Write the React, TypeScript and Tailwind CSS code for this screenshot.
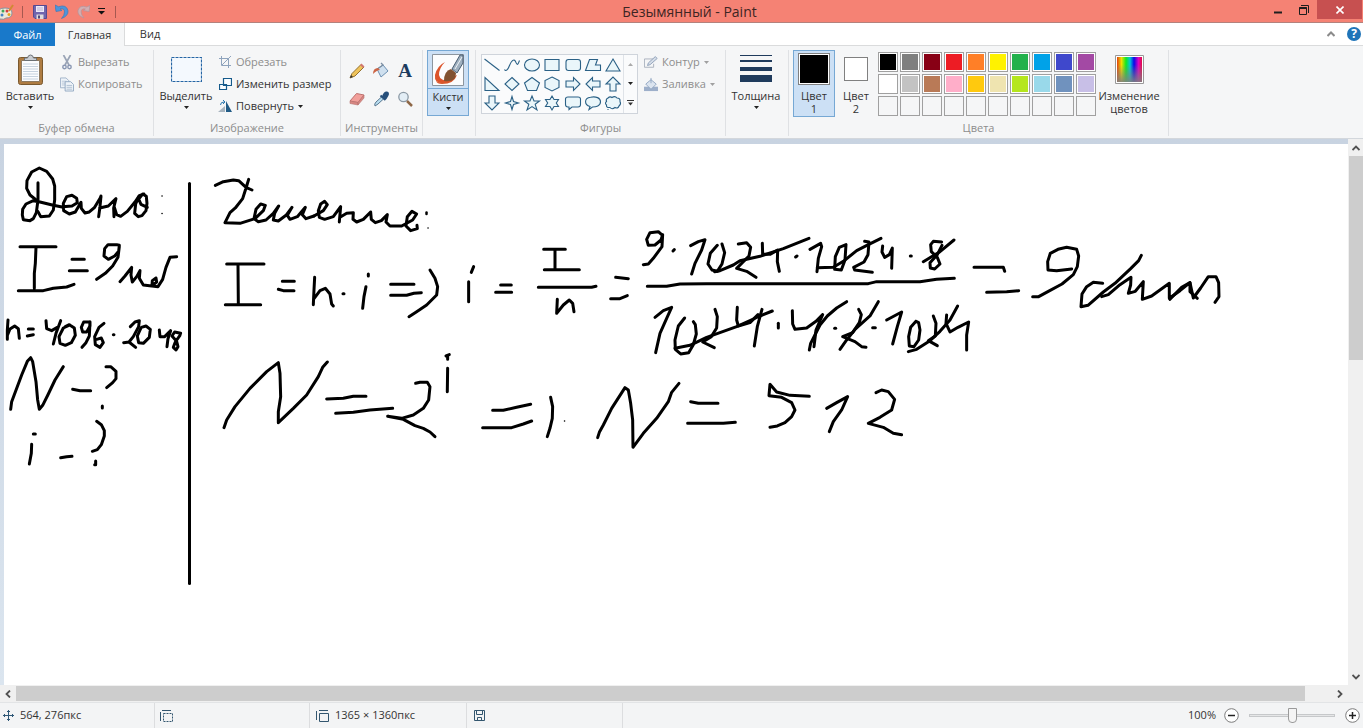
import React from "react";

type Kids = { children?: React.ReactNode };

const PALETTE: string[] = [
  "#000000", "#7f7f7f", "#880015", "#ed1c24", "#ff7f27", "#fff200", "#22b14c", "#00a2e8", "#3f48cc", "#a349a4",
  "#ffffff", "#c3c3c3", "#b97a57", "#ffaec9", "#ffc90e", "#efe4b0", "#b5e61d", "#99d9ea", "#7092be", "#c8bfe7",
  "", "", "", "", "", "", "", "", "", "",
];

const SHAPES: { name: string; d: string }[] = [
  { name: "Линия", d: "M2.5 4 17.5 15.5" },
  { name: "Кривая", d: "M2.5 14.5C4 17 6 14.5 7.5 10.5S12 3 13.5 6.5 15.5 11 17.5 5.5" },
  { name: "Овал", d: "M2.5 10a7.5 6 0 1 0 15 0a7.5 6 0 1 0-15 0" },
  { name: "Прямоугольник", d: "M3 4.5H17V15.5H3Z" },
  { name: "Скруглённый прямоугольник", d: "M5.5 4.5H15Q17.5 4.5 17.5 7V13Q17.5 15.5 15 15.5H5.5Q3 15.5 3 13V7Q3 4.5 5.5 4.5Z" },
  { name: "Многоугольник", d: "M6.5 4.5H14.5L12.5 10H17.5V15.5H2.5Z" },
  { name: "Треугольник", d: "M10 4 17 16H3Z" },
  { name: "Прямоугольный треугольник", d: "M3 3.5V16.5H17Z" },
  { name: "Ромб", d: "M10 3.5 17 10 10 16.5 3 10Z" },
  { name: "Пятиугольник", d: "M10 3.5 17.5 9 14.5 16.5H5.5L2.5 9Z" },
  { name: "Шестиугольник", d: "M10 3 17 6.5V13.5L10 17 3 13.5V6.5Z" },
  { name: "Стрелка вправо", d: "M3 7H10.5V3.5L17 10 10.5 16.5V13H3Z" },
  { name: "Стрелка влево", d: "M17 7H9.5V3.5L3 10 9.5 16.5V13H17Z" },
  { name: "Стрелка вверх", d: "M7 17V10H3L10 3 17 10H13V17Z" },
  { name: "Стрелка вниз", d: "M7 3V10H3L10 17 17 10H13V3Z" },
  { name: "Звезда 4", d: "M10 3.5 11.5 8.5 16.5 10 11.5 11.5 10 16.5 8.5 11.5 3.5 10 8.5 8.5Z" },
  { name: "Звезда 5", d: "M10 3 12 8H17.5L13.2 11.3 15 17 10 13.6 5 17 6.8 11.3 2.5 8H8Z" },
  { name: "Звезда 6", d: "M10 3 12 6.5H16.5L14.3 10 16.5 13.5H12L10 17 8 13.5H3.5L5.7 10 3.5 6.5H8Z" },
  { name: "Прямоугольная выноска", d: "M5 4H15Q17.5 4 17.5 6V11.5Q17.5 14 15 14H9L6 16.5V14H5Q2.5 14 2.5 11.5V6Q2.5 4 5 4Z" },
  { name: "Овальная выноска", d: "M7 13.5C1 12 1 5 7.5 4.2C13 3 17.5 5 17.5 8.8C17.5 13 13 14 9.5 14L6 16.5Z" },
  { name: "Выноска-облако", d: "M5 5Q7 3 9 4.5Q12 2.5 14 5Q17.5 5 17 8.5Q18.5 11 16 13Q15 16 12 14.5Q9 17 7 14.5Q3 15 3.5 12Q1.5 10 3.5 8.5Q2.5 6 5 5ZM4.5 16.5h1" },
];

type Ink = { x: number; y: number; strokes: string[] };

/* Brush strokes, grouped by area; each area uses a grid three times finer than the canvas. */
const INK: Ink[] = [
  {
    x: -4, y: 6,
    strokes: [
      "M114 98V150L109 188 100 206 90 212 70 209 67 195 68 178 78 162 100 152 120 156 160 166 190 172",
      "M114 154 90 135 80 115 81 92 95 66 118 54 140 64 158 87 164 108 164 150 160 180 148 198 122 200 114 185",
      "M188 170 216 168 232 158 230 145 216 136 200 140 190 160 191 182 208 192 226 186 243 157 244 175 255 189 268 186 284 172 302 142",
      "M303 138 300 170 296 200M299 174 325 168 348 146 341 174 342 200M343 172 350 194 362 199 382 184 405 156 416 140",
      "M432 132 418 137 407 162 404 190 415 200 426 197 438 182 441 160 439 139 428 132 416 147 423 163 442 172",
      "M60 290H168M108 292 106 340 103 370V415M55 422H130L160 415 200 411 222 403",
      "M216 328H253M208 362H262",
      "M350 284H324L314 296 312 318 325 328 344 318 356 304 358 286 350 284M358 290 354 322 338 348 316 370 290 388",
      "M360 395 375 378 395 352 393 375 397 396 410 380 420 362 418 385 430 405 455 408 470 396 468 384 457 392 456 408 474 410 488 388 498 352 510 322 530 320",
    ],
  },
  {
    x: -4, y: 166,
    strokes: [
      "M24 30 22 60V88M22 76 30 57 44 48 55 56 58 85",
      "M85 57H100M82 78 100 74",
      "M138 32 140 56 155 62 172 52M182 32 168 70 160 102",
      "M210 45 190 54 177 80 180 100 196 106 214 98 226 76 223 54 208 44 196 50",
      "M268 36 251 36 244 52 248 66 260 66 270 48 270 35 268 78 258 98 246 112",
      "M312 40 297 52 284 80 286 104 300 112 310 98 304 84 290 88",
      "M340 74H342",
      "M391 50 405 36 418 32 416 50 400 80 387 96 371 98M387 96 407 112",
      "M423 54 412 78 416 98 430 100 448 82 451 58 438 48 424 52",
      "M478 60 480 80 494 80 510 64M512 62 504 86 501 110",
      "M542 70 524 66 516 78 530 94 534 110 528 120 520 112 526 96 540 76",
      "M32 298 35 275 65 195 82 154 92 143 98 155 108 215 113 270 118 298 128 286 145 252 165 210 190 170",
      "M218 238 240 242H272",
      "M318 170H332L348 184V206L338 218 320 233M307 288V294",
      "M100 372H106M95 403 94 430 88 462",
      "M182 443 200 440 216 439",
      "M290 334 304 344 313 362V378L304 404 292 419 277 424M287 453V464H284",
    ],
  },
  {
    x: 206, y: 26,
    strokes: [
      "M16 46 40 35 70 30 86 32 108 52 126 60M116 28 110 48 98 86 76 114 60 128 45 158 90 160 135 146 160 122 166 106 152 102 138 118 132 146 145 155 168 150 190 130 206 108 194 130 190 150 205 153 228 136 246 112 232 136 240 148 262 140 286 112 277 134 288 146 312 138",
      "M312 138 340 122 352 104 344 94 332 102 325 122 328 142 344 148 370 140 392 110 388 156M390 142 410 130 430 128 429 148 440 156 460 148 482 126M482 126 484 148 496 158 514 152 532 134 528 156 540 168 575 168 608 150 620 132 606 124 592 140 588 168 602 182 622 176 621 166",
      "M50 282H162M84 285 85 400M46 404H152",
      "M217 334H253M205 358 220 362H252",
      "M314 322 312 360 310 404M312 386 330 362 346 355 360 372 365 402 370 408",
      "M399 371H402",
      "M475 312V318M468 350 462 380 458 415",
      "M542 343H612M542 376H590L612 370 634 368M660 300 675 325 683 350 680 375 650 405 620 425 597 440",
      "M791 290 784 307M776 335V395",
      "M872 345H904M857 367H905",
    ],
  },
  {
    x: 516, y: 76,
    strokes: [
      "M71 88H136M105 90V145M73 149H178M55 202H215L228 199",
      "M112 238 110 280 130 255 148 240 158 250 162 275",
      "M287 172 325 176M272 236H300L322 227",
      "M425 44 415 35 390 38 380 58 385 76 405 75 423 60 428 44 426 80 400 115 385 132 370 134",
      "M459 93 463 89",
      "M512 77 535 65 555 59 545 90 525 130 515 162",
      "M592 76 571 100 564 132 576 150 592 154 606 132 614 98 606 72",
      "M655 72 680 68 692 82 687 108 650 145 680 154 708 172",
      "M584 155 600 152 640 135 660 122 720 109 790 86 867 55",
      "M382 199H440L480 192 560 191H1045L1070 185H1200L1250 178 1303 175",
      "M405 292 430 272 455 262 440 295 420 340 407 398",
      "M494 294 475 318 465 360 466 388 482 402 506 398 520 374 529 342 526 314 520 305",
      "M585 268 592 290 590 324 574 350 548 366 583 383",
      "M652 262 650 300 655 318 690 308 714 284M726 268 712 320 703 378",
      "M465 385 510 376 560 352 650 320 720 288 757 273",
    ],
  },
  {
    x: 736, y: 76,
    strokes: [
      "M67 70 68 103H90L113 90 112 125 118 154",
      "M167 111 171 108",
      "M210 88 242 70 245 80 235 115 231 155",
      "M318 74 298 82 286 110 284 148 304 150 315 120 318 74",
      "M374 64 387 66 384 104 372 126 341 142 344 150 397 157",
      "M232 143 280 142 310 124 350 92 385 74 423 55",
      "M428 78 426 96 434 112 448 104 457 84 455 145",
      "M511 108H514",
      "M605 66 580 64 572 74 574 95 592 112 600 132 584 147 571 144 570 128 592 104 606 76",
      "M550 125 600 95 642 60",
      "M115 310V324",
      "M157 272 158 312 165 328 200 324 228 304 248 284M248 284 228 330 222 380",
      "M208 390 212 370 240 315 262 288 290 264 320 245",
      "M284 325H287",
      "M356 268 364 284 358 308 338 338 308 350 345 365 365 380 378 382",
      "M300 388 320 360 345 328 390 288 415 245",
      "M398 323H406",
      "M440 300 485 276 472 320 458 372",
      "M528 304 512 322 506 350 508 378 522 380 536 360 540 330 536 308 528 304",
      "M580 288 588 310 586 348 565 362 592 377",
      "M620 285 618 310 630 336 654 322 686 306 680 345V390",
      "M505 395 530 388 570 362 600 334 630 300 653 258",
    ],
  },
  {
    x: 956, y: 86,
    strokes: [
      "M42 112H130L134 124M80 187 140 185 176 182",
      "M335 117 290 122 264 120 263 95 271 70 294 58 320 52 350 58 356 78 352 110 340 134 306 162 265 184 236 200H218",
      "M428 160 400 157 380 170 366 192 363 230 384 226 430 186 465 160 512 116 536 92 544 76",
      "M425 200 445 194 480 164 513 142 512 165 505 190 526 184 550 155 547 208 575 198 628 160 628 205 660 182 690 158 690 185 712 205",
      "M630 208 665 172 690 158 700 204 722 174 745 140 768 140 776 158 777 200 765 217",
    ],
  },
  {
    x: 206, y: 196,
    strokes: [
      "M42 263 50 240 75 200 120 145 170 95 205 68 210 100 212 170 205 215V248L250 205 290 165 325 110 338 82 352 66",
      "M350 177 400 175 430 169H468M377 220 430 217 480 210 548 205",
      "M617 130 630 127H652L660 140 656 180 640 205 610 225 575 235 533 229 580 238 615 257 640 265 660 276 675 290",
      "M708 48 718 44M713 50V58M713 85 712 155",
      "M848 211H880L920 202 962 193M818 263H905L940 252 965 243",
      "M1022 172 1028 200 1027 235 1020 265 1012 290",
    ],
  },
  {
    x: 536, y: 226,
    strokes: [
      "M173 203 178 187 190 165 215 115 255 53 265 60 272 100 278 150 279 232 310 190 350 145 385 95 395 67 417 40",
      "M452 95 475 100H534M443 160H550L586 157",
      "M808 79 750 76 710 66 690 43 687 77 725 82 755 98 765 120 755 140 735 158 712 168 690 172",
      "M860 115 890 98 923 80 905 120 880 155 868 185",
      "M1008 68 1025 60 1045 65 1064 88 1055 120 1020 142 985 160 1030 172 1060 190 1085 194",
    ],
  },
];

function Arrow({ className = "text-[#222]" }: { className?: string }) {
  return (
    <svg className={`block shrink-0 ${className}`} width="5" height="3" viewBox="0 0 5 3" aria-hidden="true">
      <path d="M0 0H5L2.5 3Z" fill="currentColor" />
    </svg>
  );
}

function Group({ label, className, children }: Kids & { label?: string; className: string }) {
  return (
    <section className={`flex shrink-0 flex-col border-r border-[#dfe1e4] ${className}`}>
      <div className="flex h-[72px] items-start">{children}</div>
      <h2 className="text-center leading-[17px] text-[#8d8d8d]">{label}</h2>
    </section>
  );
}

function BigButton({ icon, label, className }: { icon: React.ReactNode; label: string; className: string }) {
  return (
    <button type="button" className={`flex h-[66px] flex-col items-center ${className}`}>
      <span className="flex h-[38px] items-center">{icon}</span>
      <span className="mt-px leading-[13px]">{label}</span>
      <span className="mt-1"><Arrow /></span>
    </button>
  );
}

function SmallButton({ icon, label, disabled, arrow }: { icon: React.ReactNode; label: string; disabled?: boolean; arrow?: boolean }) {
  return (
    <button type="button" disabled={disabled} className="flex h-[22px] items-center gap-1 whitespace-nowrap disabled:text-[#8d8d8d]">
      <span className="flex w-[14px] justify-center">{icon}</span>
      <span>{label}</span>
      {arrow && <Arrow className={disabled ? "text-[#a0a0a0]" : "text-[#222]"} />}
    </button>
  );
}

function ToolButton({ label, children }: Kids & { label: string }) {
  return (
    <button type="button" aria-label={label} className="flex h-7 w-6 items-center justify-center">
      <svg width="18" height="18" viewBox="0 0 18 18" fill="none">{children}</svg>
    </button>
  );
}

function TitleBar() {
  return (
    <header className="grid h-[23px] shrink-0 grid-cols-[1fr_auto_1fr] border-b border-[#b3827d] bg-[#f58274]">
      <div className="flex items-center">
        <svg width="14" height="18" viewBox="0 0 14 18" aria-hidden="true">
          <path d="M-4 11Q-2 5 5 5Q12 5 12 10Q12 15 6 15Q4 17 0 16Q-4 15-4 11Z" fill="#eee9d9" stroke="#8793a0" />
          <circle cx="3" cy="8" r="1.5" fill="#44a75b" /><circle cx="7" cy="8" r="1.5" fill="#d63d3d" />
          <circle cx="9" cy="11.5" r="1.5" fill="#e7a51c" /><circle cx="2" cy="12" r="1.5" fill="#4384c4" />
          <path d="M9 8 13 2" stroke="#d08a34" strokeWidth="2" />
        </svg>
        <span className="ml-2 h-3 w-px bg-[#a65850]" />
        <button type="button" aria-label="Сохранить" className="ml-2.5">
          <svg width="14" height="14" viewBox="0 0 14 14">
            <path d="M.5 .5H13.5V13.5H2L.5 12Z" fill="#7065ad" stroke="#544a91" />
            <path d="M3 1H11V7H3Z" fill="#eceaf8" /><path d="M4 3H10M4 5H10" stroke="#b7b3d2" />
            <path d="M3.5 9.5H10.5V14H3.5Z" fill="#ddd" /><path d="M5 10.5H7V13.5H5Z" fill="#514978" />
          </svg>
        </button>
        <button type="button" aria-label="Отменить" className="ml-2">
          <svg width="14" height="15" viewBox="0 0 14 15">
            <path d="M0 1 1 7.5 7 6.5 5 4.8Q9.5 4 9.5 8Q9.5 11.5 6.5 14.5Q13.5 12 13 6.8Q11.5 0 3.5 2.7Z" fill="#4c95dc" stroke="#4179b4" strokeWidth=".7" />
          </svg>
        </button>
        <button type="button" aria-label="Вернуть" className="ml-2">
          <svg width="13" height="15" viewBox="0 0 14 15">
            <path d="M14 1 13 7.5 7 6.5 9 4.8Q4.5 4 4.5 8Q4.5 11.5 7.5 14.5Q.5 12 1 6.8Q2.5 0 10.5 2.7Z" fill="#d3aeb1" stroke="#ad949d" strokeWidth=".7" />
          </svg>
        </button>
        <button type="button" aria-label="Настройка панели" className="ml-2">
          <svg width="7" height="7" viewBox="0 0 7 7"><path d="M0 .5H7" stroke="#111" /><path d="M0 3H7L3.5 6.5Z" fill="#111" /></svg>
        </button>
        <span className="ml-2.5 h-3 w-px bg-[#a65850]" />
      </div>
      <h1 className="pl-4 text-[14px] leading-[23px] text-[#3d2523]">Безымянный - Paint</h1>
      <div className="flex items-start justify-end">
        <button type="button" aria-label="Свернуть" className="flex h-[19px] w-[26px] items-center justify-center">
          <svg width="8" height="8" viewBox="0 0 8 8"><path d="M0 6.5H8" stroke="#1e1e1e" strokeWidth="2" /></svg>
        </button>
        <button type="button" aria-label="Восстановить" className="flex h-[19px] w-[26px] items-center justify-center">
          <svg width="10" height="10" viewBox="0 0 10 10" fill="none"><path d="M2 .5H9.5V8M.5 2.5H7.5V9.5H.5Z" stroke="#1e1e1e" /><path d="M.5 3H7.5" stroke="#1e1e1e" strokeWidth="2" /></svg>
        </button>
        <button type="button" aria-label="Закрыть" className="mr-px flex h-[19px] w-[45px] items-center justify-center bg-[#c75050]">
          <svg width="8" height="8" viewBox="0 0 8 8"><path d="M.5 .5 7.5 7.5M7.5 .5 .5 7.5" stroke="#fff" strokeWidth="1.6" /></svg>
        </button>
      </div>
    </header>
  );
}

function Tabs() {
  return (
    <nav className="flex h-[23px] shrink-0 bg-white leading-6">
      <button type="button" className="w-[55px] bg-[#1979ca] text-white">Файл</button>
      <button type="button" className="w-[70px] border-r border-[#dadbdc] bg-[#f5f6f7]">Главная</button>
      <div className="flex flex-1 items-center border-b border-[#dadbdc]">
        <button type="button" className="w-[50px]">Вид</button>
        <button type="button" aria-label="Свернуть ленту" className="ml-auto">
          <svg width="8" height="6" viewBox="0 0 8 6" fill="none"><path d="M.5 5 4 1.5 7.5 5" stroke="#8b8b8b" strokeWidth="2" /></svg>
        </button>
        <button type="button" aria-label="Справка" className="mr-0.5 ml-3 flex size-[14px] items-center justify-center rounded-full bg-[#1f74b8] text-[12px] font-bold text-white">?</button>
      </div>
    </nav>
  );
}

function Ribbon() {
  return (
    <div className="flex h-[93px] shrink-0 border-b border-[#d3d7dc] bg-[#f5f6f7] pt-1 pb-0.5">
      <Group label="Буфер обмена" className="w-[154px]">
        <BigButton className="w-[60px]" label="Вставить" icon={
          <svg width="25" height="31" viewBox="0 0 25 31">
            <rect x=".5" y="3.5" width="24" height="27" rx="2" fill="#ae7c42" stroke="#7a592f" />
            <path d="M3.5 6.5H21.5V27.5H3.5Z" fill="#fbfcfe" stroke="#8d7960" />
            <path d="M5 10H20M5 12.5H20M5 15H20M5 17.5H20M5 20H20M5 22.5H20M5 25H20" stroke="#c6d2df" />
            <path d="M6.5 6.5V4H9.5Q10 1 12.5 1T15.5 4H18.5V6.5Z" fill="#c9cdd2" stroke="#6b7075" />
          </svg>} />
        <div className="flex flex-col pt-px">
          <SmallButton disabled label="Вырезать" icon={
            <svg width="10" height="15" viewBox="0 0 10 15" fill="none"><path d="M1.5 0 7 10M8.5 0 3 10" stroke="#9aa4b6" strokeWidth="1.7" /><circle cx="2.5" cy="12" r="1.7" stroke="#8a97b3" strokeWidth="1.4" /><circle cx="7.5" cy="12" r="1.7" stroke="#8a97b3" strokeWidth="1.4" /></svg>} />
          <SmallButton disabled label="Копировать" icon={
            <svg width="15" height="15" viewBox="0 0 15 15"><path d="M.5 .5H6.5L9.5 3.5V11H.5Z" fill="#eef3f8" stroke="#9fb2c8" /><path d="M2 4H7M2 6H7M2 8H7" stroke="#bac8d8" /><path d="M5.5 4.5H11.5L14.5 7.5V14.5H5.5Z" fill="#eef3f8" stroke="#92a9c2" /><path d="M7 8.5H13M7 10.5H13M7 12.5H13" stroke="#afc0d2" /></svg>} />
        </div>
      </Group>
      <Group label="Изображение" className="w-[187px]">
        <BigButton className="ml-0.5 w-[60px]" label="Выделить" icon={
          <svg width="31" height="25" viewBox="0 0 31 25" fill="none"><rect x=".5" y=".5" width="30" height="24" fill="#f4f9fe" stroke="#2565a4" strokeWidth="1.2" strokeDasharray="3 1" /></svg>} />
        <div className="flex flex-col pt-px pl-0.5">
          <SmallButton disabled label="Обрезать" icon={
            <svg width="12" height="12" viewBox="0 0 12 12" fill="none"><path d="M2.5 0V9.5H12M0 2.5H9.5V12M3 9 12 0" stroke="#8fa4bd" /></svg>} />
          <SmallButton label="Изменить размер" icon={
            <svg width="13" height="12" viewBox="0 0 13 12" fill="#f9fcff"><path d="M4.5 .5H12.5V7.5H4.5ZM.5 6.5H7.5V11.5H.5Z" stroke="#155a8b" strokeWidth="1.2" /></svg>} />
          <SmallButton arrow label="Повернуть" icon={
            <svg width="14" height="12" viewBox="0 0 14 12"><path d="M8 1V12H14Z" fill="#215b86" /><path d="M7 6V12H0Z" fill="#a7b4bf" /><path d="M2.5 5Q2.5 2 6 2M5 0 7 2 5 4" fill="none" stroke="#2c78af" /></svg>} />
        </div>
      </Group>
      <Group label="Инструменты" className="w-[82px]">
        <div className="ml-1 flex w-[72px] flex-wrap pt-[7px]">
          <ToolButton label="Карандаш"><path d="M2 16 4 11.5 13 2.5 16 5 7 14Z" fill="#efc35a" stroke="#94722f" /><path d="M2 16 3 13 5 15Z" fill="#333" /><path d="M12 3 13.5 1.5 16.5 4.5 15 6Z" fill="#d17870" /></ToolButton>
          <ToolButton label="Заливка"><path d="M5 7 11 3 16 9 9 15Z" fill="#cfe0ef" stroke="#6c90b2" /><path d="M4 8 11 3 9 1" stroke="#7c8fa3" strokeWidth="1.3" /><path d="M6 6Q1 6 1 12Q5 8 8 8Z" fill="#cc6545" /></ToolButton>
          <button type="button" aria-label="Текст" className="flex h-7 w-6 items-center justify-center font-['Liberation_Serif',serif] text-[19px] leading-7 font-bold text-[#1c3b5e]">A</button>
          <ToolButton label="Ластик"><path d="M2 11 8.5 3.5 16 5 10 12.5Z" fill="#f2a09b" stroke="#bd716e" /><path d="M2 11 10 12.5V15L2 13.5ZM10 12.5 16 5V8L10 15Z" fill="#d98783" stroke="#b77371" strokeWidth=".6" /></ToolButton>
          <ToolButton label="Палитра"><path d="M3 16Q2 14 4 12L10 6.5 12 8.5 6 14Z" fill="#b9def1" stroke="#5a7890" /><path d="M8.5 5.5 13.5 10M11 6.5Q12.5 2 15 2.5T14 8Z" fill="#264f7a" stroke="#264f7a" strokeWidth="2" /></ToolButton>
          <ToolButton label="Масштаб"><circle cx="7.5" cy="7" r="4.7" fill="#e3eef6" stroke="#8b99a5" strokeWidth="1.3" /><path d="M11 11 16 16" stroke="#8d6747" strokeWidth="2.5" /></ToolButton>
        </div>
      </Group>
      <Group className="w-[53px]">
        <button type="button" className="ml-1 flex h-[66px] w-[42px] flex-col items-center border border-[#76a8d4] bg-[#cce0f5]">
          <span className="flex h-[38px] w-full items-center justify-center border-b border-[#76a8d4]">
            <svg width="32" height="32" viewBox="0 0 32 32">
              <path d="M.5 .5H31.5V31.5H.5Z" fill="#fbfcfd" stroke="#8c959e" />
              <path d="M13 8Q5 12 3 21Q2 30 12 29L18 27Q8 27 7 21Q7 14 13 8Z" fill="#dc542b" />
              <path d="M4 27Q8 30 14 26L25 21Q22 30 10 30Q5 30 4 27Z" fill="#d9572c" />
              <path d="M12 27Q12 17 19 15L24 19Q24 29 12 27Z" fill="#815231" /><path d="M20 15 28 1H31V9L25 19Z" fill="#9fb0bf" stroke="#485d72" /><path d="M23 15 30 3" stroke="#eef2f5" />
            </svg>
          </span>
          <span className="leading-4">Кисти</span>
          <span className="mt-0.5"><Arrow /></span>
        </button>
      </Group>
      <Group label="Фигуры" className="w-[250px]">
        <div className="mt-1 ml-[5px] flex h-[60px] w-[157px] border border-[#cfd4db] bg-[#fafbfc]">
          <div className="grid w-[141px] grid-cols-7 grid-rows-3">
            {SHAPES.map((s) => (
              <button type="button" key={s.name} aria-label={s.name} className="flex items-center justify-center overflow-hidden">
                <svg className="shrink-0" width="20" height="20" viewBox="0 0 20 20"><path d={s.d} fill={s.name === "Линия" || s.name === "Кривая" ? "none" : "#eaf6fa"} stroke="#2b6186" strokeWidth="1.1" /></svg>
              </button>
            ))}
          </div>
          <div className="flex flex-1 flex-col border-l border-[#dfe3e8]">
            <button type="button" aria-label="Вверх" className="flex flex-1 items-center justify-center"><svg width="5" height="3" viewBox="0 0 5 3"><path d="M0 3H5L2.5 0Z" fill="#aaa" /></svg></button>
            <button type="button" aria-label="Вниз" className="flex flex-1 items-center justify-center"><Arrow /></button>
            <button type="button" aria-label="Все фигуры" className="flex flex-1 items-center justify-center"><svg width="7" height="6" viewBox="0 0 7 6"><path d="M0 .5H7" stroke="#333" /><path d="M1 2.5H6L3.5 5.5Z" fill="#333" /></svg></button>
          </div>
        </div>
        <div className="flex flex-col pt-px pl-1.5">
          <SmallButton disabled arrow label="Контур" icon={
            <svg width="16" height="14" viewBox="0 0 16 14" fill="none"><path d="M11 3.5H.5V13H11V9" stroke="#a3acb9" /><path d="M4 11 5 8 13 .8 15 3 7 10Z" fill="#d5dde8" stroke="#8a9db6" /></svg>} />
          <SmallButton disabled arrow label="Заливка" icon={
            <svg width="16" height="15" viewBox="0 0 16 15"><path d="M0 10H16V15H0Z" fill="#9dafca" /><path d="M2 7 8 2 14 7 8 13Z" fill="#dbe4ef" stroke="#8ba1bf" /><path d="M8 6V0" stroke="#8ba1bf" /></svg>} />
        </div>
      </Group>
      <Group className="w-[63px]">
        <BigButton className="w-[60px]" label="Толщина" icon={
          <svg width="32" height="28" viewBox="0 0 32 28" fill="#1f3b5d"><path d="M0 0H32V1H0ZM0 5H32V7H0ZM0 12H32V16H0ZM0 20H32V27H0Z" /></svg>} />
      </Group>
      <Group label="Цвета" className="w-[380px]">
        <button type="button" className="ml-1 flex h-[67px] w-[42px] flex-col items-center border border-[#76a8d4] bg-[#cce0f5]">
          <span className="mt-0.5 size-8 border border-[#808080] bg-black outline -outline-offset-2 outline-white" />
          <span className="mt-1 leading-[13px]">Цвет<br />1</span>
        </button>
        <button type="button" className="flex h-[67px] w-[42px] flex-col items-center">
          <span className="mt-[7px] size-6 border border-[#808080] bg-white" />
          <span className="mt-2 leading-[13px]">Цвет<br />2</span>
        </button>
        <div className="mt-0.5 ml-px grid grid-cols-10 gap-0.5">
          {PALETTE.map((c, i) => (
            <button type="button" key={i} aria-label={`Цвет палитры ${i + 1}`} className="size-5 border border-[#a0a0a0]">
              {c && <span className="block size-[18px] border border-white" style={{ backgroundColor: c }} />}
            </button>
          ))}
        </div>
        <button type="button" className="ml-0.5 flex h-[66px] w-[62px] flex-col items-center">
          <span className="flex h-[39px] items-center">
            <svg width="29" height="29" viewBox="0 0 29 29">
              <defs>
                <linearGradient id="hue"><stop offset="0" stopColor="#e04010" /><stop offset=".18" stopColor="#f0e000" /><stop offset=".36" stopColor="#10e820" /><stop offset=".52" stopColor="#00c8d8" /><stop offset=".68" stopColor="#0808e8" /><stop offset=".86" stopColor="#e000c0" /><stop offset="1" stopColor="#e01040" /></linearGradient>
                <linearGradient id="fade" x2="0" y2="1"><stop offset=".3" stopColor="#808080" stopOpacity="0" /><stop offset="1" stopColor="#808080" stopOpacity=".9" /></linearGradient>
              </defs>
              <path d="M.5 .5H28.5V28.5H.5Z" fill="#fff" stroke="#999" /><path d="M2 2H27V27H2Z" fill="url(#hue)" /><path d="M2 2H27V27H2Z" fill="url(#fade)" />
            </svg>
          </span>
          <span className="leading-[13px]">Изменение цветов</span>
        </button>
      </Group>
    </div>
  );
}

function Chevron({ d }: { d: string }) {
  return <svg className="block" width="8" height="8" viewBox="0 0 8 8" fill="none"><path d={d} stroke="#505050" strokeWidth="1.8" /></svg>;
}

function Workspace() {
  return (
    <main className="flex min-h-0 flex-1 flex-col">
      <div className="flex min-h-0 flex-1">
        <div className="min-w-0 flex-1 overflow-hidden bg-linear-to-b from-[#c8d3e1] to-[#dbe5ef] pt-[5px] pl-1">
          <div className="h-full overflow-hidden bg-white">
            <svg width="1345" height="541" viewBox="0 0 1345 541" fill="none" stroke="#000" strokeLinecap="round" strokeLinejoin="round" role="img" aria-label="Рукописное решение задачи">
              {INK.map((area, i) => (
                <g key={i} transform={`translate(${area.x} ${area.y}) scale(.3333)`} strokeWidth="9">
                  {area.strokes.map((d, j) => <path key={j} d={d} />)}
                </g>
              ))}
              <path d="M185.5 39.5V439.5" strokeWidth="3" />
              <path d="M158 52h.1M158 69.5h.1M424 84h.1M560.5 277h.1" strokeWidth="1.5" />
              <path d="M422.5 68.5V70" strokeWidth="2.5" />
            </svg>
          </div>
        </div>
        <div className="flex w-[15px] shrink-0 flex-col items-center bg-[#f0f0f0]">
          <button type="button" aria-label="Прокрутить вверх" className="flex h-[17px] items-center"><Chevron d="M.5 6 4 2.5 7.5 6" /></button>
          <div className="h-[204px] w-[14px] bg-[#cdcdcd]" />
          <button type="button" aria-label="Прокрутить вниз" className="mt-auto flex h-[17px] items-center"><Chevron d="M.5 2 4 5.5 7.5 2" /></button>
        </div>
      </div>
      <div className="flex h-[17px] shrink-0 items-center bg-[#f0f0f0] pr-[15px]">
        <button type="button" aria-label="Прокрутить влево" className="flex w-4 justify-center"><Chevron d="M6 .5 2.5 4 6 7.5" /></button>
        <div className="h-[15px] w-[1289px] bg-[#cdcdcd]" />
        <button type="button" aria-label="Прокрутить вправо" className="ml-auto flex w-4 justify-center"><Chevron d="M2 .5 5.5 4 2 7.5" /></button>
      </div>
    </main>
  );
}

function StatusCell({ className, children }: Kids & { className: string }) {
  return <div className={`flex h-full shrink-0 items-center gap-1.5 border-r border-[#dcdddf] ${className}`}>{children}</div>;
}

function StatusBar() {
  return (
    <footer className="flex h-[26px] shrink-0 items-center border-t border-[#e2e4e6] bg-[#f3f4f5]">
      <StatusCell className="w-[155px] pl-[3px]">
        <svg width="11" height="11" viewBox="0 0 11 11" fill="none"><path d="M5.5 0V11M0 5.5H11M4 2 5.5 .5 7 2M4 9 5.5 10.5 7 9M2 4 .5 5.5 2 7M9 4 10.5 5.5 9 7" stroke="#2f5877" /></svg>
        564, 276пкс
      </StatusCell>
      <StatusCell className="w-[155px] pl-[5px]">
        <svg width="13" height="12" viewBox="0 0 13 12" fill="none"><path d="M3.5 3.5H12.5V11.5H3.5Z" stroke="#33566f" strokeDasharray="2 1" /><path d="M2 .5H11M.5 2V11" stroke="#33566f" /></svg>
      </StatusCell>
      <StatusCell className="w-[157px] pl-[6px]">
        <svg width="13" height="12" viewBox="0 0 13 12" fill="none"><path d="M3.5 3.5H12.5V11.5H3.5Z" stroke="#33566f" /><path d="M3 .5H12M.5 1V10" stroke="#33566f" /></svg>
        1365 × 1360пкс
      </StatusCell>
      <StatusCell className="w-[156px] pl-[7px]">
        <svg width="11" height="11" viewBox="0 0 11 11" fill="none"><path d="M.5 .5H10.5V10.5H.5ZM2.5 .5V4.5H8.5V.5M3.5 10.5V7.5H7.5V10.5" stroke="#33566f" /></svg>
      </StatusCell>
      <div className="ml-auto flex items-center pr-[3px]">
        <label htmlFor="zoom" className="mr-2">100%</label>
        <button type="button" aria-label="Уменьшить"><svg className="block" width="15" height="15" viewBox="0 0 15 15" fill="none"><circle cx="7.5" cy="7.5" r="6.8" fill="#fff" stroke="#7c7c7c" /><path d="M4 7.5H11" stroke="#222" strokeWidth="1.5" /></svg></button>
        <input id="zoom" type="range" min="0" max="100" defaultValue="50" className="mx-2.5 h-4 w-[86px] appearance-none bg-transparent [&::-webkit-slider-runnable-track]:h-[3px] [&::-webkit-slider-runnable-track]:border [&::-webkit-slider-runnable-track]:border-[#c6c8ca] [&::-webkit-slider-runnable-track]:bg-[#e5e6e7] [&::-webkit-slider-thumb]:mt-[-7px] [&::-webkit-slider-thumb]:h-[15px] [&::-webkit-slider-thumb]:w-[9px] [&::-webkit-slider-thumb]:appearance-none [&::-webkit-slider-thumb]:rounded-b-sm [&::-webkit-slider-thumb]:border [&::-webkit-slider-thumb]:border-[#9a9a9a] [&::-webkit-slider-thumb]:bg-[#f4f4f4]" />
        <button type="button" aria-label="Увеличить"><svg className="block" width="15" height="15" viewBox="0 0 15 15" fill="none"><circle cx="7.5" cy="7.5" r="6.8" fill="#fff" stroke="#7c7c7c" /><path d="M4 7.5H11M7.5 4V11" stroke="#222" strokeWidth="1.5" /></svg></button>
      </div>
    </footer>
  );
}

export default function App() {
  return (
    <div className="flex h-screen flex-col overflow-hidden bg-[#f5f6f7] font-['Open_Sans','Noto_Sans',sans-serif] text-[11px] text-[#333]">
      <TitleBar />
      <Tabs />
      <Ribbon />
      <Workspace />
      <StatusBar />
    </div>
  );
}
